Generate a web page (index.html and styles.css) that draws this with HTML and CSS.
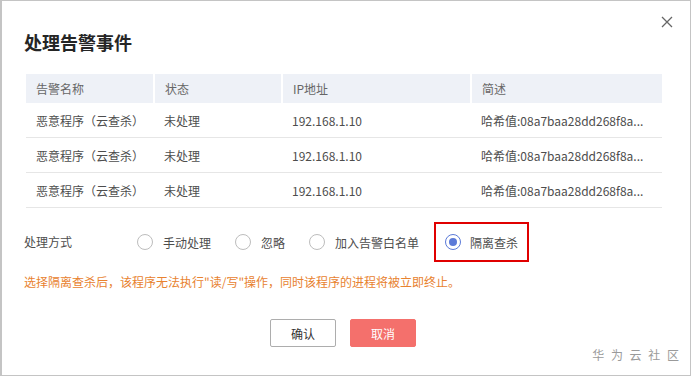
FILE: index.html
```html
<!DOCTYPE html>
<html>
	<head>
		<meta charset="utf-8" />
		<title>处理告警事件</title>
		<link rel="stylesheet" href="styles.css">
	</head>
	<body>
		<div class="dialog">
			<span class="close">
				<svg width="12" height="12" viewBox="0 0 12 12"><path d="M1 1L11 11M11 1L1 11" stroke="#666" stroke-width="1.3" fill="none"/></svg>
			</span>
			<h1 class="title">处理告警事件</h1>
			<table class="events">
				<thead>
					<tr>
						<th class="col-name">告警名称</th>
						<th class="col-state">状态</th>
						<th class="col-ip">IP地址</th>
						<th>简述</th>
					</tr>
				</thead>
				<tbody>
					<tr>
						<td>恶意程序（云查杀）</td>
						<td>未处理</td>
						<td>192.168.1.10</td>
						<td>哈希值:08a7baa28dd268f8a...</td>
					</tr>
					<tr>
						<td>恶意程序（云查杀）</td>
						<td>未处理</td>
						<td>192.168.1.10</td>
						<td>哈希值:08a7baa28dd268f8a...</td>
					</tr>
					<tr>
						<td>恶意程序（云查杀）</td>
						<td>未处理</td>
						<td>192.168.1.10</td>
						<td>哈希值:08a7baa28dd268f8a...</td>
					</tr>
				</tbody>
			</table>
			<div class="method">
				<span class="method-label">处理方式</span>
				<label class="option"><span class="radio"></span>手动处理</label>
				<label class="option"><span class="radio"></span>忽略</label>
				<label class="option"><span class="radio"></span>加入告警白名单</label>
				<label class="option highlight"><span class="radio checked"></span>隔离查杀</label>
			</div>
			<p class="warning">选择隔离查杀后，该程序无法执行"读/写"操作，同时该程序的进程将被立即终止。</p>
			<div class="actions">
				<button class="btn">确认</button>
				<button class="btn primary">取消</button>
			</div>
			<div class="watermark">华 为 云 社 区</div>
		</div>
	</body>
</html>
```

FILE: styles.css
```css
body {
	margin: 0;
	background: #fff;
	font-family: "Noto Sans CJK SC", "Liberation Sans", sans-serif;
	font-size: 12px;
	color: #555;
}
.dialog {
	position: relative;
	box-sizing: border-box;
	width: 691px;
	height: 376px;
	border: 1px solid #c4c4c4;
	border-left-width: 2px;
	padding: 29px 0 0 22px;
}
.close {
	position: absolute;
	top: 15px;
	right: 17px;
	line-height: 0;
}
.title {
	margin: 0;
	font-size: 18px;
	line-height: 24px;
	font-weight: bold;
	color: #252525;
}
.events {
	margin: 20px 0 0 2px;
	width: 636px;
	border-collapse: collapse;
	table-layout: fixed;
}
.events th {
	height: 29px;
	padding: 0 0 0 10px;
	background: #eef1f7;
	border-left: 2px solid #fff;
	font-weight: normal;
	text-align: left;
	color: #666;
}
.events th:first-child {
	border-left: none;
}
.col-name { width: 117px; }
.col-state { width: 116px; }
.col-ip { width: 177px; }
.events td {
	height: 34px;
	padding: 0 0 0 10px;
	border-bottom: 1px solid #e6e6e6;
	white-space: nowrap;
	overflow: hidden;
	color: #4d4d4d;
}
.method {
	display: flex;
	align-items: center;
	margin-top: 14px;
	height: 40px;
	color: #4d4d4d;
}
.method-label {
	width: 113px;
	margin-top: -2px;
}
.option {
	display: flex;
	align-items: center;
	gap: 10px;
	margin-right: 24px;
}
.radio {
	box-sizing: border-box;
	width: 16px;
	height: 16px;
	border: 1px solid #bdbdbd;
	border-radius: 50%;
	background: #fff;
}
.radio.checked {
	border-color: #5b7ad8;
	position: relative;
}
.radio.checked::after {
	content: "";
	position: absolute;
	left: 3px;
	top: 3px;
	width: 8px;
	height: 8px;
	border-radius: 50%;
	background: #5b7ad8;
}
.highlight {
	box-sizing: border-box;
	height: 40px;
	margin-left: -9px;
	padding: 0 9px 0 9px;
	border: 2px solid #e00000;
	gap: 9px;
}
.warning {
	margin: 11px 0 0 0;
	line-height: 18px;
	color: #e8822f;
}
.actions {
	display: flex;
	justify-content: center;
	gap: 14px;
	margin-top: 28px;
	padding-right: 28px;
}
.btn {
	width: 66px;
	height: 28px;
	padding: 0;
	border: 1px solid #adadad;
	border-radius: 2px;
	background: #fff;
	font-family: inherit;
	font-size: 12px;
	color: #333;
}
.btn.primary {
	background: #f4706c;
	border-color: #f4706c;
	color: #fff;
}
.watermark {
	position: absolute;
	right: 9px;
	bottom: 12px;
	font-size: 12px;
	letter-spacing: 2px;
	color: #9a9a9a;
}
```
